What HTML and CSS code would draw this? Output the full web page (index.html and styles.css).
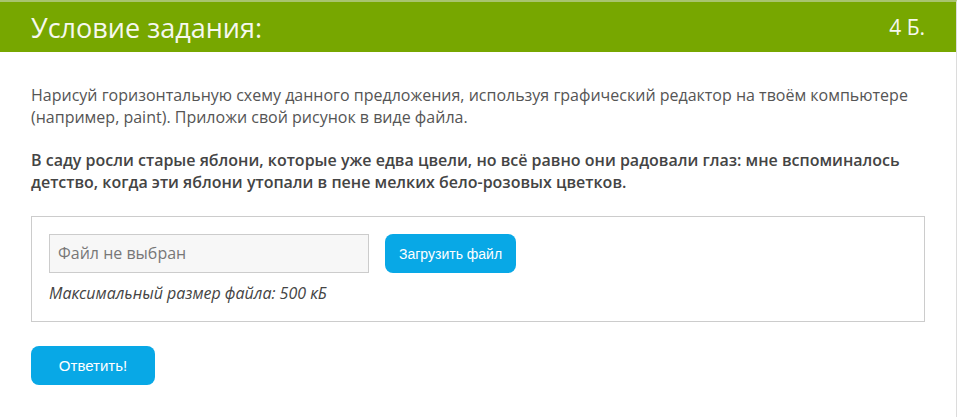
FILE: index.html
```html
<!DOCTYPE html>
<html lang="ru">

<head>
    <meta charset="UTF-8">
    <title>Условие задания</title>
    <link rel="stylesheet" href="styles.css">
</head>

<body>
    <div class="task">
        <div class="task-header">
            <h1>Условие задания:</h1>
            <span class="points">4 Б.</span>
        </div>

        <div class="task-body">
            <p class="task-text">Нарисуй горизонтальную схему данного предложения, используя графический редактор на твоём компьютере (например, paint). Приложи свой рисунок в виде файла.</p>
            <p class="task-sentence">В саду росли старые яблони, которые уже едва цвели, но всё равно они радовали глаз: мне вспоминалось детство, когда эти яблони утопали в пене мелких бело-розовых цветков.</p>

            <div class="upload-box">
                <div class="upload-row">
                    <div class="file-name">Файл не выбран</div>
                    <button type="button" class="btn">Загрузить файл</button>
                </div>
                <p class="file-limit">Максимальный размер файла: 500 кБ</p>
            </div>

            <button type="button" class="btn btn-answer">Ответить!</button>
        </div>
    </div>
</body>

</html>
```

FILE: styles.css
```css
body {
    margin: 0;
    font-family: 'Open Sans', 'Noto Sans', sans-serif;
    background-color: #fff;
}

.task {
    width: 957px;
    height: 417px;
    border-right: 1px solid #dcdcdc;
    border-top: 2px solid #a8c46e;
    box-sizing: border-box;
}

.task-header {
    display: flex;
    justify-content: space-between;
    align-items: center;
    height: 50px;
    padding: 0 31px;
    background-color: #77a700;
    color: #f6f8ef;
}

.task-header h1 {
    margin: 0;
    font-size: 27px;
    font-weight: normal;
}

.points {
    font-size: 21px;
}

.task-body {
    padding: 32px 31px 0;
}

.task-text {
    margin: 0;
    font-size: 16px;
    line-height: 22px;
    color: #555;
}

.task-sentence {
    margin: 21px 0 0;
    font-size: 16px;
    line-height: 22px;
    font-weight: 600;
    color: #444;
}

.upload-box {
    margin-top: 23px;
    padding: 17px 17px 17px;
    border: 1px solid #ccc;
}

.upload-row {
    display: flex;
    align-items: center;
    gap: 16px;
}

.file-name {
    width: 302px;
    height: 37px;
    padding: 0 8px;
    border: 1px solid #ccc;
    background-color: #f7f7f7;
    color: #777;
    font-size: 16px;
    line-height: 37px;
}

.btn {
    height: 39px;
    padding: 0 14px;
    border: none;
    border-radius: 8px;
    background-color: #08a8e6;
    color: #fff;
    font-family: 'Liberation Sans', Arial, sans-serif;
    font-size: 14px;
    cursor: pointer;
}

.file-limit {
    margin: 9px 0 0;
    font-size: 16px;
    font-style: italic;
    color: #444;
}

.btn-answer {
    margin-top: 24px;
    width: 124px;
    font-size: 15px;
}
```
